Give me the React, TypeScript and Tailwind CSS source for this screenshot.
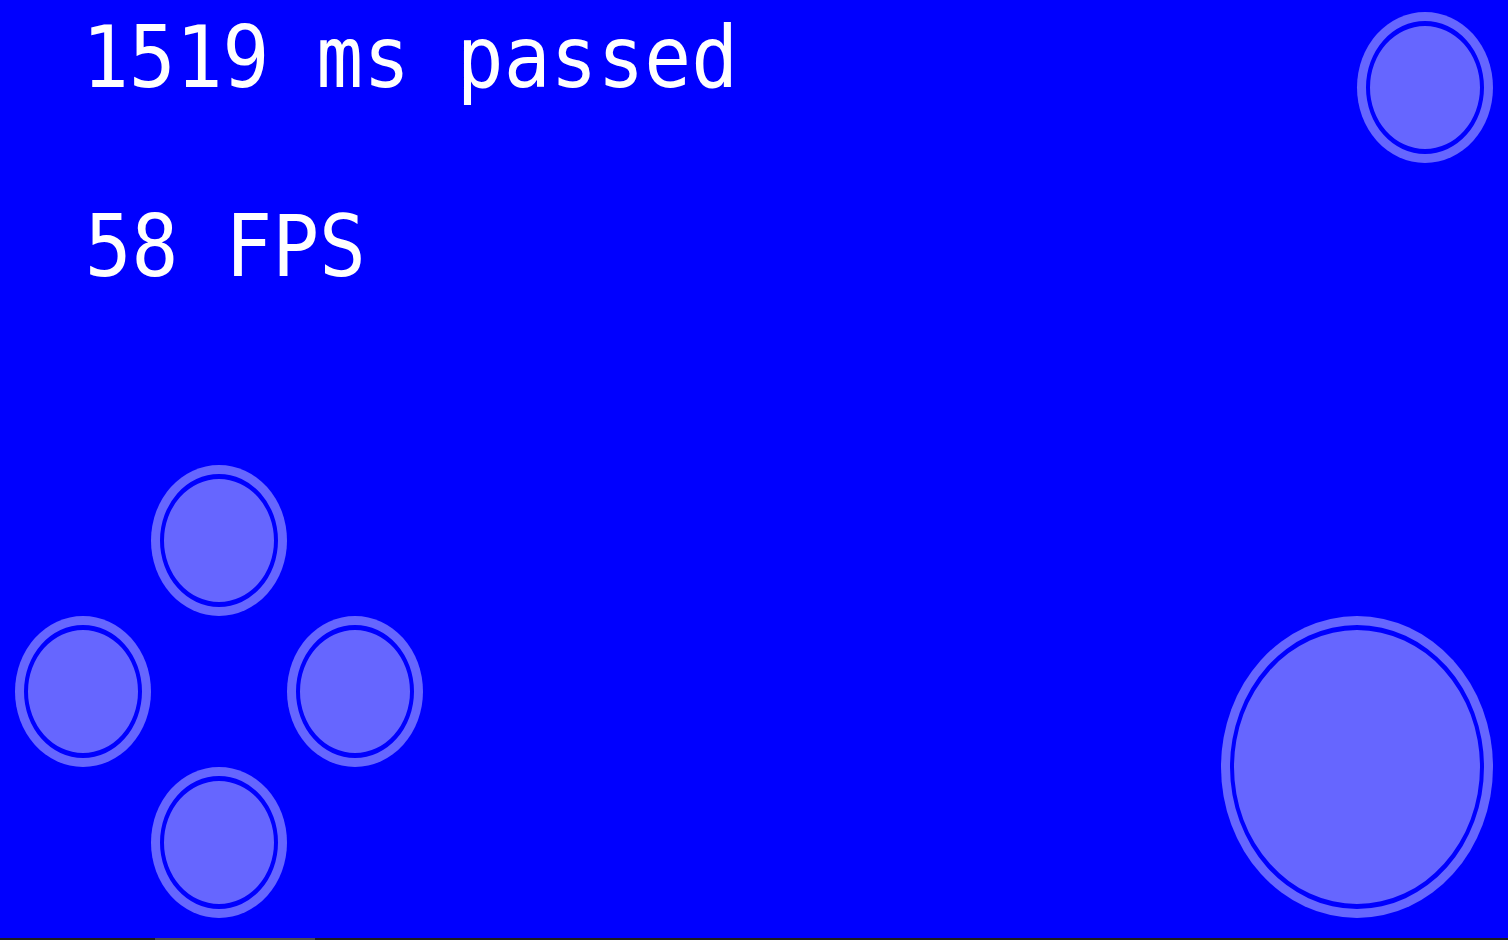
import React from "react";

function Btn({ big = false }: { big?: boolean }) {
  return (
    <div
      className={
        (big ? "w-[272px] h-[302px]" : "w-[136px] h-[151px]") +
        " rounded-[50%] bg-[#6666ff] px-[9px] py-[9px]"
      }
    >
      <div className="w-full h-full rounded-[50%] border-x-4 border-y-[5px] border-[#0000ff] bg-[#6666ff]" />
    </div>
  );
}

export default function App() {
  return (
    <div className="h-[940px] w-full flex flex-col overflow-hidden bg-[#1e1e1e]">
      <div className="flex-1 bg-[#0000ff] flex flex-col justify-between">
        <div className="flex justify-between items-start pr-[15px]">
          <div
            className="pl-[82px] pt-[14px] flex flex-col gap-[103px] text-white text-[86px] leading-none whitespace-pre"
            style={{ fontFamily: '"DejaVu Sans Mono", monospace' }}
          >
            <div className="origin-left scale-x-[0.905]">1519 ms passed</div>
            <div className="origin-left scale-x-[0.905] pl-[3px]">58 FPS</div>
          </div>
          <div className="mt-[12px]">
            <Btn />
          </div>
        </div>
        <div className="flex justify-between items-end px-[15px] pb-[20px]">
          <div className="grid grid-cols-[136px_136px_136px] grid-rows-[151px_151px_151px]">
            <div />
            <Btn />
            <div />
            <Btn />
            <div />
            <Btn />
            <div />
            <Btn />
            <div />
          </div>
          <Btn big />
        </div>
      </div>
      <div className="h-[2px] flex">
        <div className="ml-[155px] w-[160px] h-full bg-[#4d4d4d]" />
      </div>
    </div>
  );
}
